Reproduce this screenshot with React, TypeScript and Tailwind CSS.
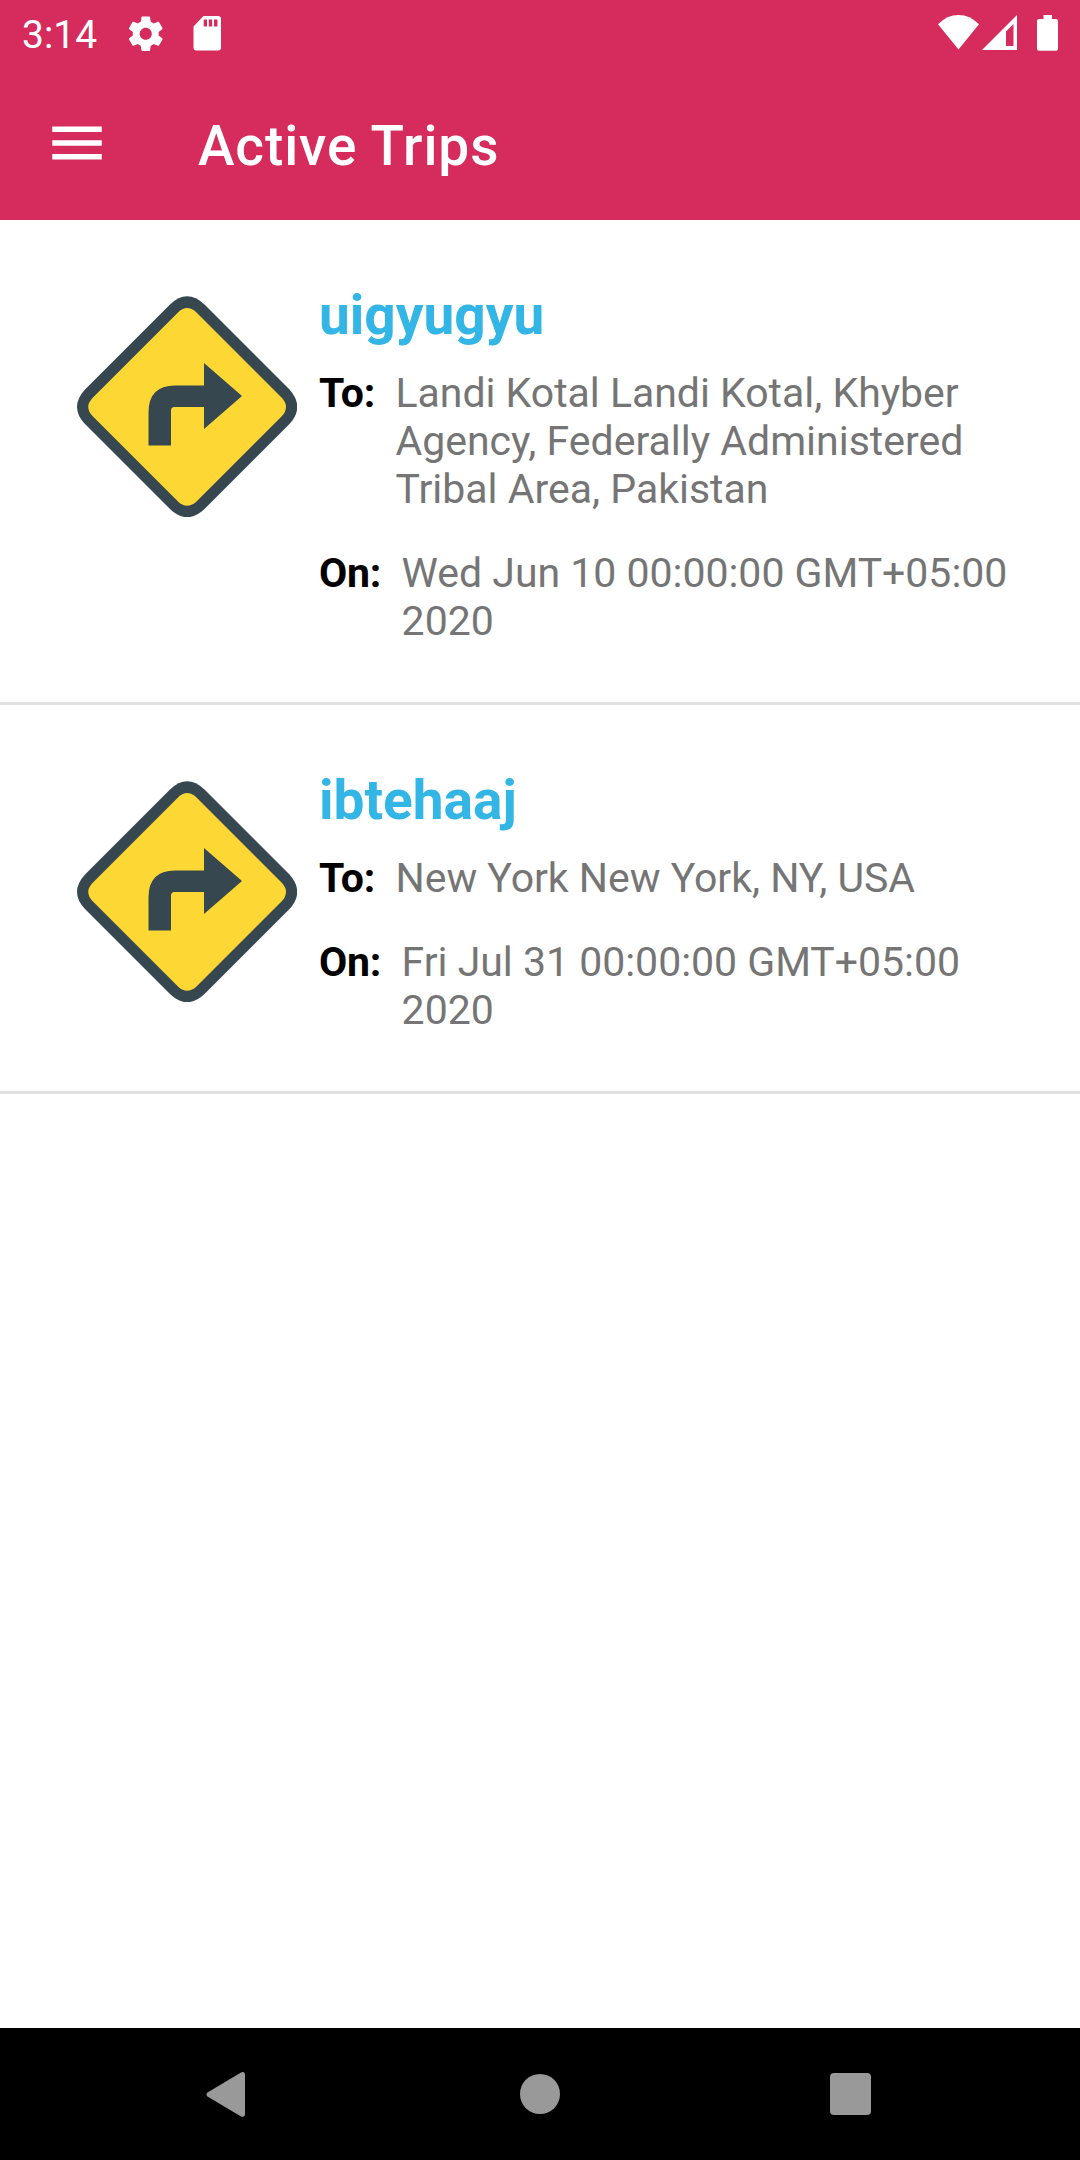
const trips = [
  {
    name: 'uigyugyu',
    to: ['Landi Kotal Landi Kotal, Khyber', 'Agency, Federally Administered', 'Tribal Area, Pakistan'],
    on: ['Wed Jun 10 00:00:00 GMT+05:00', '2020'],
  },
  {
    name: 'ibtehaaj',
    to: ['New York New York, NY, USA'],
    on: ['Fri Jul 31 00:00:00 GMT+05:00', '2020'],
  },
];

function StatusBar() {
  return (
    <div className="flex h-[66px] items-start justify-between text-white">
      <div className="flex items-start pl-[22px]">
        <span className="mt-[13px] w-[103px] text-[39px] leading-[45px]">3:14</span>
        <svg className="mt-[12.5px] h-[41.5px] w-[41.5px]" viewBox="0 0 24 24" fill="currentColor">
          <path d="M19.43 12.98c.04-.32.07-.64.07-.98s-.03-.66-.07-.98l2.11-1.65c.19-.15.24-.42.12-.64l-2-3.46c-.12-.22-.39-.3-.61-.22l-2.49 1c-.52-.4-1.08-.73-1.69-.98l-.38-2.65C14.46 2.18 14.25 2 14 2h-4c-.25 0-.46.18-.49.42l-.38 2.65c-.61.25-1.17.59-1.69.98l-2.49-1c-.23-.09-.49 0-.61.22l-2 3.46c-.13.22-.07.49.12.64l2.11 1.65c-.04.32-.07.65-.07.98s.03.66.07.98l-2.11 1.65c-.19.15-.24.42-.12.64l2 3.46c.12.22.39.3.61.22l2.49-1c.52.4 1.08.73 1.69.98l.38 2.65c.03.24.24.42.49.42h4c.25 0 .46-.18.49-.42l.38-2.65c.61-.25 1.17-.59 1.69-.98l2.49 1c.23.09.49 0 .61-.22l2-3.46c.12-.22.07-.49-.12-.64l-2.11-1.65zM12 15.5c-1.93 0-3.5-1.57-3.5-3.5s1.57-3.5 3.5-3.5 3.5 1.57 3.5 3.5-1.57 3.5-3.5 3.5z" />
        </svg>
        <svg className="ml-[26.5px] mt-[16px] h-[35px] w-[28px]" viewBox="0 0 28 35" fill="currentColor">
          <path
            fillRule="evenodd"
            d="M10.5 0H25Q28 0 28 3V31.5Q28 34.5 25 34.5H3.500Q.5 34.500 .5 31.5V10.500ZM10.700 3.500V10.500H14V3.500ZM15.800 3.500V10.500H19.200V3.500ZM21 3.500V10.500H24.500V3.500Z"
          />
        </svg>
      </div>
      <svg className="mr-[22px] mt-[15px] h-[36px] w-[120px]" viewBox="0 0 120 36" fill="currentColor">
        <path d="M0 9.300Q9 0 20.500 0T41 9.300L20.500 34.500Z" />
        <path fillRule="evenodd" d="M79 0V35H44ZM75.500 9L68 16.500V31H75.500Z" />
        <path d="M105.500 0H114V4H118Q120 4 120 6V33.500Q120 35.700 118 35.700H101Q99 35.700 99 33.500V6Q99 4 101 4H105.500Z" />
      </svg>
    </div>
  );
}

function TurnSign() {
  return (
    <svg className="mt-[76px] h-[221px] w-[220px] shrink-0" viewBox="0 0 220 221">
      <path
        d="M93 8.500Q110-8 127.500 8.500L212.500 93.500Q228 111 212.500 128L127.500 213Q110 229.500 93 213L8 128Q-8 111 8 93.500Z"
        fill="#37474f"
      />
      <path
        d="M101.500 16Q110 8 119 16L205 102Q213 111 205 120L119 206Q110 213.500 101.500 206L15.500 120Q7 111 15.500 102Z"
        fill="#fdd835"
      />
      <path d="M71.500 149.500V116.500Q71.500 89.500 98 89.500H127V67L165 100L127 133V111H97.500Q94 111 94 114.500V149.500Z" fill="#37474f" />
    </svg>
  );
}

function Detail({ label, lines }: { label: string; lines: string[] }) {
  return (
    <div className="flex text-[41px] leading-[48px]">
      <span className="font-bold tracking-[-0.2px] text-black">{label}</span>
      <div className="ml-[20.4px] whitespace-nowrap text-[#757575]">
        {lines.map((line) => (
          <p key={line} className="first:tracking-[-0.02px]">
            {line}
          </p>
        ))}
      </div>
    </div>
  );
}

export default function App() {
  return (
    <div className="flex h-[2160px] w-[1080px] flex-col overflow-hidden bg-white font-['Roboto',sans-serif]">
      <header className="h-[220px] shrink-0 bg-[#d52b5d]">
        <StatusBar />
        <div className="flex h-[154px] items-center pl-[44px] text-white">
          <svg className="h-[66px] w-[66px]" viewBox="0 0 24 24" fill="currentColor">
            <path d="M3 18h18v-2H3v2zm0-5h18v-2H3v2zm0-7v2h18V6H3z" />
          </svg>
          <h1 className="ml-[88px] mt-[5px] text-[55px] font-medium leading-[64px] tracking-[0.9px]">Active Trips</h1>
        </div>
      </header>
      <main className="flex-1">
        {trips.map((trip) => (
          <article key={trip.name} className="flex items-start border-b-[3px] border-[#e0e0e0] pb-[57px] pl-[77px]">
            <TurnSign />
            <div className="ml-[22px] pt-[63px]">
              <h2 className="mb-[22px] text-[55px] font-bold leading-[64px] text-[#33b5e5]">{trip.name}</h2>
              <div className="flex flex-col gap-[36px]">
                <Detail label="To:" lines={trip.to} />
                <Detail label="On:" lines={trip.on} />
              </div>
            </div>
          </article>
        ))}
      </main>
      <nav className="flex h-[132px] shrink-0 items-center bg-black pl-[206px] text-[#999999]">
        <svg className="h-[46px] w-[40px]" viewBox="0 0 40 46" fill="currentColor">
          <path d="M1.500 21.500L35 1.500Q39 0 39 4V43Q39 46.500 35 45.500L1.500 25.500Q-.5 23.500 1.500 21.500Z" />
        </svg>
        <div className="ml-[274px] h-[40px] w-[40px] rounded-full bg-[#999999]" />
        <div className="ml-[270px] h-[42px] w-[41px] rounded-[4px] bg-[#999999]" />
      </nav>
    </div>
  );
}
